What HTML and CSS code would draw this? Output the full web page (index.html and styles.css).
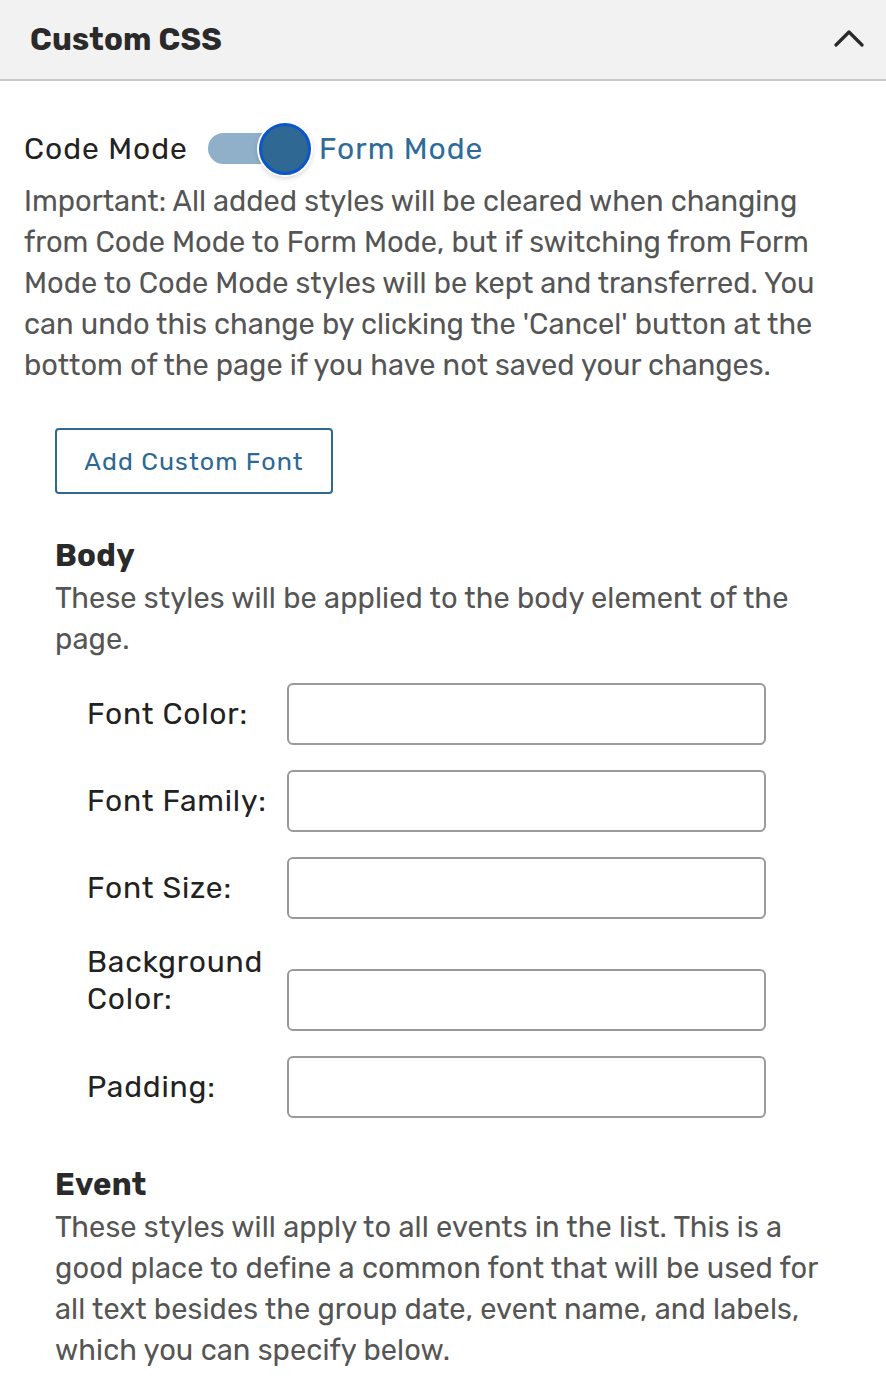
FILE: index.html
```html
<!DOCTYPE html>
<html>
<head>
<meta charset="utf-8">
<link rel="stylesheet" href="styles.css">
</head>
<body>
<div class="panel">
  <div class="panel-header">
    <h2 class="panel-title">Custom CSS</h2>
    <svg class="chevron" width="30" height="18" viewBox="0 0 30 18"><path d="M2 16 L15 3 L28 16" fill="none" stroke="#2a2a2a" stroke-width="3.2" stroke-linecap="round" stroke-linejoin="round"/></svg>
  </div>
  <div class="panel-body">
    <div class="mode-row">
      <span class="mode-label">Code Mode</span>
      <span class="switch"><span class="switch-track"></span><span class="switch-knob"></span></span>
      <span class="mode-label active">Form Mode</span>
    </div>
    <p class="note">Important: All added styles will be cleared when changing from Code Mode to Form Mode, but if switching from Form Mode to Code Mode styles will be kept and transferred. You can undo this change by clicking the 'Cancel' button at the bottom of the page if you have not saved your changes.</p>
    <div class="section">
      <button class="btn-outline">Add Custom Font</button>
      <h3 class="section-title">Body</h3>
      <p class="section-desc">These styles will be applied to the body element of the page.</p>
      <div class="form">
        <div class="form-row"><label class="form-label">Font Color:</label><input class="form-input" type="text"></div>
        <div class="form-row"><label class="form-label">Font Family:</label><input class="form-input" type="text"></div>
        <div class="form-row"><label class="form-label">Font Size:</label><input class="form-input" type="text"></div>
        <div class="form-row tall"><label class="form-label">Background Color:</label><input class="form-input" type="text"></div>
        <div class="form-row"><label class="form-label">Padding:</label><input class="form-input" type="text"></div>
      </div>
      <h3 class="section-title event">Event</h3>
      <p class="section-desc">These styles will apply to all events in the list. This is a good place to define a common font that will be used for all text besides the group date, event name, and labels, which you can specify below.</p>
    </div>
  </div>
</div>
</body>
</html>
```
FILE: styles.css
```css
* { box-sizing: border-box; }
html, body { margin: 0; padding: 0; background: #fff; }
body {
  font-family: "Rubik", "Inter", "Noto Sans", sans-serif;
  color: #222;
}
.panel { width: 886px; }
.panel-header {
  height: 81px;
  background: #f2f2f2;
  border-bottom: 2px solid #c9c9c9;
  display: flex;
  align-items: center;
  justify-content: space-between;
  padding: 0 22px 0 30px;
}
.panel-title {
  margin: 0;
  font-size: 31px;
  font-weight: 700;
  color: #2a2a2a;
  letter-spacing: 0.2px;
}
.chevron { margin-top: -4px; }
.panel-body { padding: 40px 24px 0 24px; }
.mode-row {
  display: flex;
  align-items: center;
  height: 56px;
}
.mode-label { font-size: 30px; color: #222; letter-spacing: 1px; }
.mode-label.active { color: #2e6b9a; }
.switch {
  position: relative;
  width: 106px;
  height: 56px;
  margin-left: 20px;
  margin-right: 5px;
  display: block;
}
.switch-track {
  position: absolute;
  left: 0;
  top: 12px;
  width: 90px;
  height: 31px;
  border-radius: 16px;
  background: #8fb0c8;
}
.switch-knob {
  position: absolute;
  left: 51px;
  top: 2px;
  width: 52px;
  height: 52px;
  border-radius: 50%;
  background: #2e6893;
  border: 3px solid #0b56c9;
  box-shadow: 0 0 0 2px #fff, 0 2px 6px rgba(0,0,0,0.25);
}
.note {
  margin: 4px 0 0 0;
  font-size: 29px;
  line-height: 41px;
  letter-spacing: 0;
  color: #555;
}
.section { padding: 42px 30px 0 31px; }
.btn-outline {
  display: block;
  width: 278px;
  height: 66px;
  border: 2px solid #2e6893;
  border-radius: 4px;
  background: #fff;
  color: #2e6893;
  font-family: inherit;
  font-size: 25px;
  letter-spacing: 1.1px;
  padding: 0;
}
.section-title {
  margin: 40px 0 0 0;
  font-size: 31px;
  line-height: 44px;
  font-weight: 700;
  color: #2a2a2a;
  letter-spacing: 0.3px;
}
.section-title.event { margin-top: 45px; }
.section-desc {
  margin: 0;
  font-size: 29px;
  line-height: 41px;
  letter-spacing: 0.1px;
  color: #555;
}
.form {
  padding: 23px 0 0 32px;
  display: flex;
  flex-direction: column;
  gap: 25px;
}
.form-row {
  display: flex;
  align-items: center;
}
.form-label {
  width: 200px;
  font-size: 30px;
  line-height: 37px;
  letter-spacing: 0.8px;
  color: #222;
}
.form-input {
  width: 479px;
  height: 62px;
  border: 2px solid #9a9a9a;
  border-radius: 6px;
  background: #fff;
  margin: 0;
}
.form-row.tall { align-items: flex-start; }
.form-row.tall .form-label { width: 180px; margin-right: 20px; }
.form-row.tall .form-input { margin-top: 25px; }
```
